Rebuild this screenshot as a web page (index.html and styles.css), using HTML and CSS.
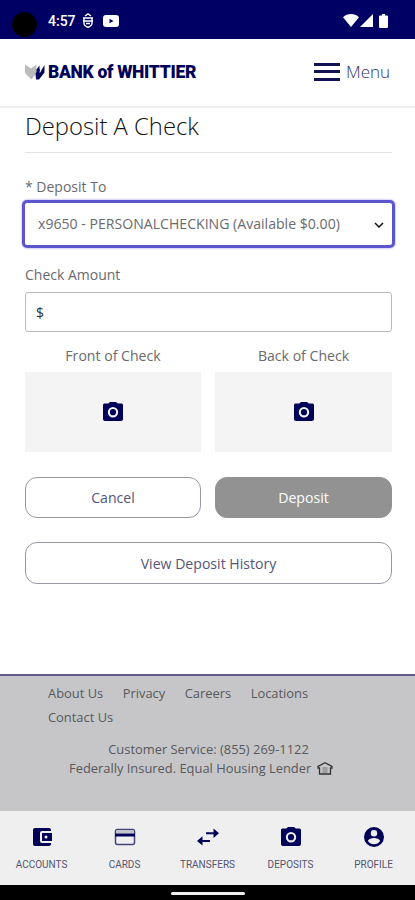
FILE: index.html
```html
<!DOCTYPE html>
<html lang="en">
<head>
<meta charset="utf-8">
<meta name="viewport" content="width=device-width">
<title>Deposit A Check</title>
<link rel="stylesheet" href="styles.css">
</head>
<body>
<svg class="symbols" aria-hidden="true">
  <symbol id="camera" viewBox="0 0 24 24"><path d="M9 2 7.200 3.500H4c-1.100 0-2 .5-2 1.500v14c0 1.100.9 2 2 2h16c1.100 0 2-.9 2-2V5c0-1-.9-1.500-2-1.500h-3.200L15 2zm3 5a5.200 5.200 0 1 1 0 10.400A5.200 5.200 0 0 1 12 7z"/><circle cx="12" cy="12.200" r="3.100"/></symbol>
</svg>
<div class="status">
  <span class="lens"></span>
  <span class="clock">4:57</span>
  <svg class="shield" viewBox="0 0 12 16"><path d="M3 3 6 1l3 2" fill="none" stroke="#fff" stroke-width="1.500"/><path d="M1 5h10M1 8h10" stroke="#fff" stroke-width="1.300"/><path d="M2 5v5c0 2 1.800 3.600 4 4.200 2.200-.6 4-2.200 4-4.200V5M4 10.500h4" fill="none" stroke="#fff" stroke-width="1.400"/></svg>
  <svg class="video" viewBox="0 0 16 12"><rect width="16" height="12" rx="3" fill="#fff"/><path d="m6.500 3.700 4 2.300-4 2.300z" fill="#000064"/></svg>
  <span class="signals">
    <svg class="wifi" viewBox="0 0 16 13"><path d="M8 13 0 3.200C4.500-1 11.500-1 16 3.200z" fill="#fff"/></svg>
    <svg class="cell" viewBox="0 0 13 13"><path d="M13 0v13H0z" fill="#fff"/></svg>
    <svg class="battery" viewBox="0 0 9 14"><path d="M3 0h3v1.500h2q1 0 1 1V13q0 1-1 1H1q-1 0-1-1V2.500q0-1 1-1h2z" fill="#fff"/></svg>
  </span>
</div>
<header class="header">
  <div class="brand">
    <svg class="mark" viewBox="0 0 20 16"><path d="M0 .5 6 4.500 11.500.5V9L6.500 15.500 0 9z" fill="#bbb"/><path d="m10.500 9.500 4.200-5v4.800L19.500 1v7.500L14 15.500h-3z" fill="#050560"/><path d="m11.500 5.500 3-4v5l-3 3.500z" fill="#050560"/></svg>
    <span class="brand-name">BANK of WHITTIER</span>
  </div>
  <div class="menu"><span class="bars"><i></i><i></i><i></i></span><span class="menu-text">Menu</span></div>
</header>
<main class="main">
  <h1><span>Deposit A Check</span></h1>
  <div class="label to-label">* Deposit To</div>
  <div class="select"><span>x9650 - PERSONALCHECKING (Available $0.00)</span><svg viewBox="0 0 10 6"><path d="m1 1 4 4 4-4" fill="none" stroke="#111" stroke-width="1.500"/></svg></div>
  <div class="label amount-label">Check Amount</div>
  <div class="amount">$</div>
  <div class="photos">
    <div><div class="caption">Front of Check</div><div class="tile"><svg><use href="#camera"/></svg></div></div>
    <div><div class="caption back">Back of Check</div><div class="tile"><svg><use href="#camera"/></svg></div></div>
  </div>
  <div class="actions"><div class="button cancel">Cancel</div><div class="button deposit">Deposit</div></div>
  <div class="button history">View Deposit History</div>
</main>
<footer class="footer">
  <div class="links"><span class="about">About Us</span><span class="privacy">Privacy</span><span class="careers">Careers</span><span>Locations</span></div>
  <div class="links second"><span>Contact Us</span></div>
  <div class="service">Customer Service: (855) 269-1122</div>
  <div class="insured"><span>Federally Insured. Equal Housing Lender</span><svg viewBox="0 0 16 13"><path d="M1 6V4.500L8 .8l7 3.700V6h-1.500v6h-11V6z" fill="none" stroke="#333" stroke-width="1.300"/><path d="M5.500 6h5M5.500 8h5M5.500 10h5" stroke="#777"/></svg></div>
</footer>
<nav class="tabs">
  <div class="tab accounts"><svg viewBox="0 0 24 24"><path d="M21 18v1c0 1.100-.9 2-2 2H5a2 2 0 0 1-2-2V5a2 2 0 0 1 2-2h14c1.100 0 2 .9 2 2v1h-9a2 2 0 0 0-2 2v8a2 2 0 0 0 2 2zm-9-2h10V8H12zm4-2.500a1.500 1.500 0 1 1 0-3 1.500 1.500 0 0 1 0 3z"/></svg><span>ACCOUNTS</span></div>
  <div class="tab cards"><svg viewBox="0 0 24 24"><rect x="2.500" y="4.500" width="19" height="15" rx="2" fill="#efefef" stroke="#44447c" stroke-width="1.500"/><path d="M3.300 5.300h17.400v3H3.300z" fill="#c3c3ca"/><path d="M2 8.500h20v3H2z"/></svg><span>CARDS</span></div>
  <div class="tab transfers"><svg viewBox="0 0 24 24"><path d="M17.500 3.500v3.700H10v2h7.500v3.700L23 8.200zM6.500 11.200v3.700H14v2H6.500v3.700L1 15.900z"/></svg><span>TRANSFERS</span></div>
  <div class="tab deposits"><svg><use href="#camera"/></svg><span>DEPOSITS</span></div>
  <div class="tab profile"><svg viewBox="0 0 24 24"><path d="M12 2a10 10 0 1 0 0 20 10 10 0 0 0 0-20zm0 3a3.200 3.200 0 1 1 0 6.400A3.200 3.200 0 0 1 12 5zm0 14.200a7.200 7.200 0 0 1-6-3.220c.03-1.990 4-3.080 6-3.080s5.970 1.090 6 3.080a7.200 7.200 0 0 1-6 3.220z"/></svg><span>PROFILE</span></div>
</nav>
<div class="system"><span></span></div>
</body>
</html>
```
FILE: styles.css
```css
* { box-sizing: border-box; }
body { margin: 0; width: 415px; height: 900px; overflow: hidden; background: #fff; font-family: "Open Sans", "Noto Sans", sans-serif; font-weight: 400; color: #6a6a6e; white-space: nowrap; }
svg { display: block; flex: none; }
.symbols { width: 0; height: 0; position: absolute; }
.status { height: 39px; background: #000064; display: flex; align-items: center; padding: 2px 27px 0 12px; }
.lens { width: 25px; height: 25px; border-radius: 50%; background: #000; margin-top: 7px; }
.clock { width: 27px; margin-left: 11px; color: #fff; font: 500 14px Roboto, sans-serif; }
.shield { width: 12px; height: 16px; margin-left: 7px; }
.video { width: 16px; height: 12px; margin-left: 9px; }
.signals { display: flex; align-items: center; margin-left: auto; }
.wifi { width: 16px; height: 13px; }
.cell { width: 13px; height: 13px; margin-left: 1px; }
.battery { width: 9px; height: 14px; margin-left: 6px; }
.header { height: 69px; border-bottom: 2px solid #eee; display: flex; justify-content: space-between; align-items: center; padding: 0 25px 2px; }
.brand { display: flex; align-items: center; }
.mark { width: 20px; height: 16px; }
.brand-name { margin-left: 3px; color: #000058; font: 900 17.500px/20px Roboto, sans-serif; letter-spacing: -.3px; }
.menu { display: flex; align-items: center; }
.bars { width: 26px; height: 18px; display: flex; flex-direction: column; justify-content: space-between; margin: 0 6px 0 0; }
.bars i { height: 3px; background: #111154; }
.menu-text { font-size: 17px; line-height: 22px; font-weight: 300; color: #333366; width: 44px; }
.main { height: 566px; padding: 0 23px 0 25px; }
h1 { margin: 0; height: 45px; border-bottom: 1px solid #e4e4e4; font-size: 23.800px; line-height: 36px; font-weight: 300; color: #111; }
.label { font-size: 14px; line-height: 20px; }
.to-label { margin-top: 24px; }
.select { width: 373px; height: 48px; margin: 3px 0 0 -3px; border: 3px solid #5c55ce; box-shadow: 0 0 2px #7770ff; border-radius: 5px; padding: 0 8px 1px 13px; display: flex; justify-content: space-between; align-items: center; font-size: 14.100px; }
.select svg { width: 10px; height: 6px; margin-top: 2px; }
.amount-label { margin-top: 17px; }
.amount { margin-top: 7px; height: 40px; border: 1px solid #bbb; border-radius: 3px; padding-left: 10px; font-size: 14px; line-height: 39px; color: #333; }
.photos, .actions { display: grid; grid-template-columns: 176px 177px; gap: 14px; }
.photos { margin-top: 14px; }
.caption { text-align: center; font-size: 14.100px; line-height: 20px; }
.tile { margin-top: 6px; height: 80px; background: #f4f4f4; display: flex; align-items: center; justify-content: center; }
.tile svg { width: 24px; height: 24px; fill: #000058; margin-top: -1px; }
.actions { margin-top: 25px; }
.button { height: 41px; border: 1px solid #9797a5; border-radius: 12px; text-align: center; font-size: 14.100px; line-height: 39px; color: #55557a; }
.deposit { background: #929292; border-color: #929292; color: #fff; }
.history { margin-top: 24px; height: 42px; line-height: 41px; }
.footer { height: 137px; border-top: 2px solid #625d88; background: #c6c6c8; padding: 5px 0 0; font-size: 12.900px; color: #58585c; }
.links { display: flex; padding-left: 48px; line-height: 24px; height: 24px; }
.about, .privacy, .careers { margin-right: 19.500px; }
.service { margin-top: 11px; padding-left: 2px; text-align: center; line-height: 19px; }
.insured { display: flex; padding-left: 69px; line-height: 19px; }
.insured svg { width: 16px; height: 13px; margin: 3px 0 0 6px; }
.tabs { height: 74px; background: #efefef; display: grid; grid-template-columns: repeat(5, 83px); padding-top: 14px; }
.tab { display: flex; flex-direction: column; align-items: center; }
.tab svg { width: 24px; height: 24px; fill: #000058; }
.tab span { margin-top: 9px; font: 400 10px/14px Roboto, sans-serif; color: #55556f; }
.system { height: 15px; background: #000; display: flex; justify-content: center; padding-top: 7px; }
.system span { width: 74px; height: 3px; border-radius: 2px; background: #eee; }
```
